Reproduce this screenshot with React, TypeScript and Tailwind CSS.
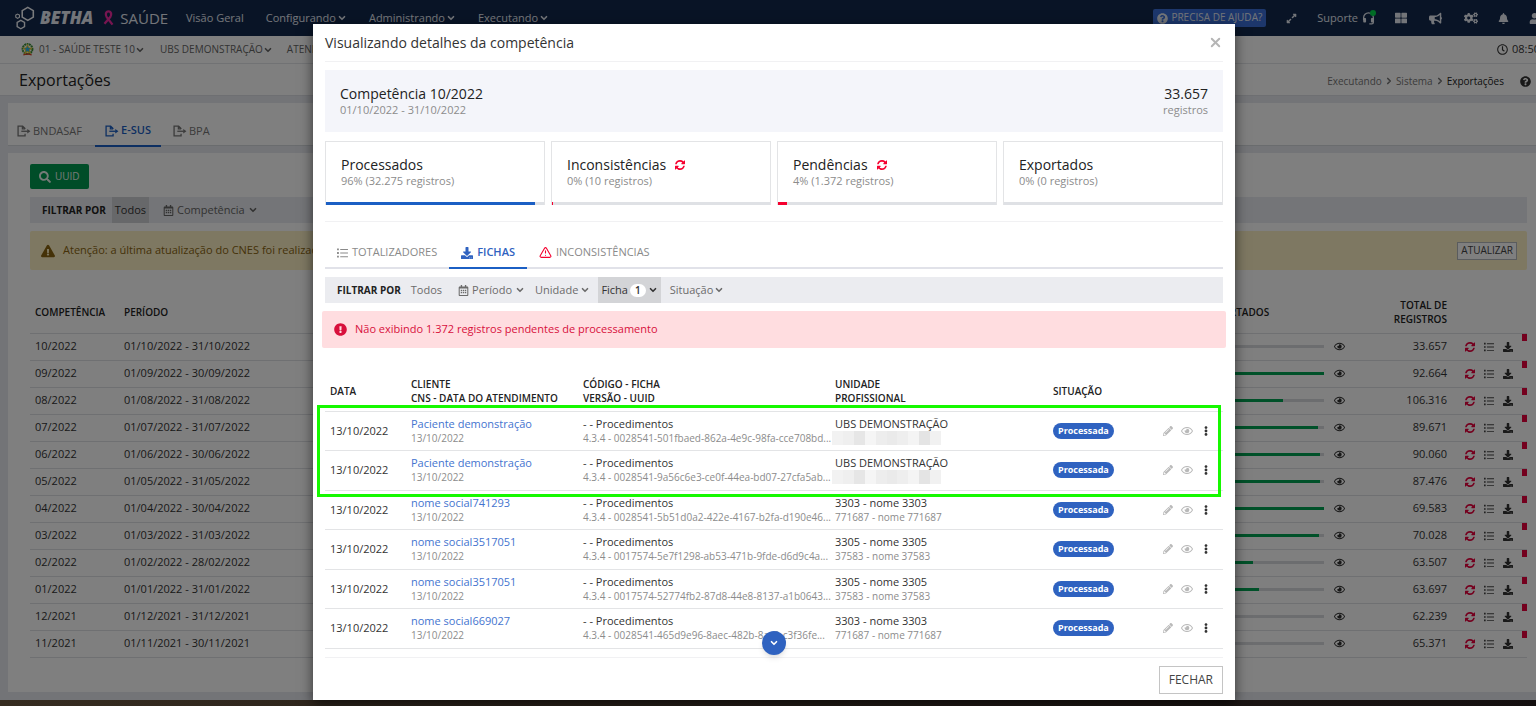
import type { ReactNode } from "react";
import {
  FaBell,
  FaBullhorn,
  FaCogs,
  FaDownload,
  FaEllipsisV,
  FaExclamationCircle,
  FaExclamationTriangle,
  FaExpandAlt,
  FaPencilAlt,
  FaQuestionCircle,
  FaRegCalendarAlt,
  FaRegClock,
  FaRegEye,
  FaSearch,
  FaThLarge,
  FaUser,
} from "react-icons/fa";
import { ChevronDown, ChevronRight, TriangleAlert, X } from "lucide-react";

const competencias = [
  { id: "10/2022", periodo: "01/10/2022 - 31/10/2022", exported: 0, total: "33.657" },
  { id: "09/2022", periodo: "01/09/2022 - 30/09/2022", exported: 100, total: "92.664" },
  { id: "08/2022", periodo: "01/08/2022 - 31/08/2022", exported: 66, total: "106.316" },
  { id: "07/2022", periodo: "01/07/2022 - 31/07/2022", exported: 95, total: "89.671" },
  { id: "06/2022", periodo: "01/06/2022 - 30/06/2022", exported: 97, total: "90.060" },
  { id: "05/2022", periodo: "01/05/2022 - 31/05/2022", exported: 97, total: "87.476" },
  { id: "04/2022", periodo: "01/04/2022 - 30/04/2022", exported: 100, total: "69.583" },
  { id: "03/2022", periodo: "01/03/2022 - 31/03/2022", exported: 96, total: "70.028" },
  { id: "02/2022", periodo: "01/02/2022 - 28/02/2022", exported: 41, total: "63.507" },
  { id: "01/2022", periodo: "01/01/2022 - 31/01/2022", exported: 46, total: "63.697" },
  { id: "12/2021", periodo: "01/12/2021 - 31/12/2021", exported: 0, total: "62.239" },
  { id: "11/2021", periodo: "01/11/2021 - 30/11/2021", exported: 0, total: "65.371" },
];

const summaries = [
  { title: "Processados", detail: "96% (32.275 registros)", percent: 96, bar: "bg-[#1b5fc4]", refresh: false },
  { title: "Inconsistências", detail: "0% (10 registros)", percent: 0.5, bar: "bg-[#f5002f]", refresh: true },
  { title: "Pendências", detail: "4% (1.372 registros)", percent: 4, bar: "bg-[#f5002f]", refresh: true },
  { title: "Exportados", detail: "0% (0 registros)", percent: 0, bar: "bg-[#00a651]", refresh: false },
];

const fichas = [
  { cliente: "Paciente demonstração", uuid: "4.3.4 - 0028541-501fbaed-862a-4e9c-98fa-cce708bd...", unidade: "UBS DEMONSTRAÇÃO", profissional: "" },
  { cliente: "Paciente demonstração", uuid: "4.3.4 - 0028541-9a56c6e3-ce0f-44ea-bd07-27cfa5ab...", unidade: "UBS DEMONSTRAÇÃO", profissional: "" },
  { cliente: "nome social741293", uuid: "4.3.4 - 0028541-5b51d0a2-422e-4167-b2fa-d190e46...", unidade: "3303 - nome 3303", profissional: "771687 - nome 771687" },
  { cliente: "nome social3517051", uuid: "4.3.4 - 0017574-5e7f1298-ab53-471b-9fde-d6d9c4a...", unidade: "3305 - nome 3305", profissional: "37583 - nome 37583" },
  { cliente: "nome social3517051", uuid: "4.3.4 - 0017574-52774fb2-87d8-44e8-8137-a1b0643...", unidade: "3305 - nome 3305", profissional: "37583 - nome 37583" },
  { cliente: "nome social669027", uuid: "4.3.4 - 0028541-465d9e96-8aec-482b-8ac0-c3f36fe...", unidade: "3303 - nome 3303", profissional: "771687 - nome 771687" },
];

const maskTones = [
  "bg-[#f2f2f2]",
  "bg-[#efefef]",
  "bg-[#e6e6e6]",
  "bg-[#f5f5f5]",
  "bg-[#ededed]",
  "bg-[#eaeaea]",
  "bg-[#eeeeee]",
  "bg-[#f4f4f4]",
  "bg-[#e4e4e4]",
  "bg-[#f1f1f1]",
];

function Caret() {
  return <ChevronDown className="size-[10px]" strokeWidth={4} aria-hidden="true" />;
}

function RefreshIcon({ className }: { className?: string }) {
  return (
    <svg viewBox="0 0 1536 1536" className={className} fill="currentColor" aria-hidden="true">
      <path d="M1511 928q0 5-1 7-64 268-268 434.500t-478 166.500q-146 0-282.500-55t-243.500-157l-129 129q-19 19-45 19t-45-19-19-45v-448q0-26 19-45t45-19h448q26 0 45 19t19 45-19 45l-137 137q71 66 161 102t187 36q134 0 250-65t186-179q11-17 53-117 8-23 30-23h192q13 0 22.500 9.500t9.500 22.500zm25-800v448q0 26-19 45t-45 19h-448q-26 0-45-19t-19-45 19-45l138-138q-148-137-349-137-134 0-250 65t-186 179q-11 17-53 117-8 23-30 23h-199q-13 0-22.500-9.500t-9.500-22.500v-7q65-268 270-434.500t480-166.500q146 0 284 55.500t245 156.500l130-129q19-19 45-19t45 19 19 45z" />
    </svg>
  );
}

function ListIcon({ className }: { className?: string }) {
  return (
    <svg viewBox="0 0 24 22" className={className} fill="currentColor" aria-hidden="true">
      <path d="M0 1h4v4H0zM0 9h4v4H0zM0 17h4v4H0zM7 2h17v2.200H7zM7 10h17v2.200H7zM7 18h17v2.200H7z" />
    </svg>
  );
}

function FileExportIcon() {
  return (
    <svg viewBox="0 0 26 22" className="h-3 w-[14px]" fill="none" stroke="currentColor" strokeWidth="2.4" aria-hidden="true">
      <path d="M15 7V6.500L10.500 2H2v18h13v-4M10 2v5h5" />
      <path d="M8 11.500h12" />
      <path d="M19 7.500l6 4-6 4z" fill="currentColor" stroke="none" />
    </svg>
  );
}

function BethaMark() {
  return (
    <svg viewBox="0 0 22 26" className="h-6 w-[22px]" fill="none" stroke="#f4f6fa" aria-hidden="true">
      <path d="M14 1.500l6 3.500v7l-6 3.500-6-3.500V5z" strokeWidth="1.700" />
      <path d="M6.500 15.500l4 2.300v4.600l-4 2.300-4-2.300v-4.600z" strokeWidth="1.500" />
      <path d="M3 8.800l2 1.100v2.300l-2 1.200-2-1.200V9.900z" strokeWidth="1.200" />
    </svg>
  );
}

function RibbonIcon() {
  return (
    <svg viewBox="0 0 12 18" className="h-4 w-[11px]" fill="none" stroke="#ee2aa0" aria-hidden="true">
      <path d="M10.500 16.500L4 8C2.200 5.500 2.800 1.500 6 1.500S9.800 5.500 8 8L1.500 15.500" strokeWidth="2.600" />
    </svg>
  );
}

function HeadsetIcon() {
  return (
    <svg viewBox="0 0 16 16" className="size-[13px]" fill="currentColor" aria-hidden="true">
      <path d="M2 10V7a6 6 0 0 1 12 0v5.500a2 2 0 0 1-2 2H9" fill="none" stroke="currentColor" strokeWidth="1.600" />
      <rect x="1.500" y="7.500" width="3.500" height="5.500" rx="1" />
      <rect x="11" y="7.500" width="3.500" height="5.500" rx="1" />
    </svg>
  );
}

function CrestIcon() {
  return (
    <svg viewBox="0 0 14 14" className="size-[13px]" aria-hidden="true">
      <circle cx="7" cy="6.500" r="5.300" fill="none" stroke="#3d8f3a" strokeWidth="2.200" strokeDasharray="2 .6" />
      <path d="M7 .8l1.700 4 4 .3-3.100 2.700 1 4.100L7 9.900l-3.600 2 1-4.100L1.300 5.100l4-.3z" fill="#f1d021" />
      <path d="M7 3l1 2.500 2.600.2-2 1.700.6 2.600L7 8.600 4.800 10l.6-2.600-2-1.700L6 5.500z" fill="#2fb3e8" />
      <path d="M2.500 12.800l4.500-1 4.500 1" fill="none" stroke="#d8432b" strokeWidth="1.300" />
    </svg>
  );
}

function IconButton({ label, className, children }: { label: string; className?: string; children: ReactNode }) {
  return (
    <button type="button" aria-label={label} className={className}>
      {children}
    </button>
  );
}

function TopNav() {
  return (
    <header className="flex h-9 items-center bg-[#12294d] pl-[14px] text-xs text-[#e6eaf2]">
      <div className="flex w-[172px] items-center">
        <BethaMark />
        <span className="ml-1 text-[17px] font-extrabold italic">BETHA</span>
        <span className="ml-[10px]">
          <RibbonIcon />
        </span>
        <span className="ml-[6px] text-[15px]">SAÚDE</span>
      </div>
      <nav className="flex items-center gap-[22px] text-[11px]">
        <a href="#">Visão Geral</a>
        {["Configurando", "Administrando", "Executando"].map((item) => (
          <a key={item} href="#" className="flex items-center gap-px">
            {item}
            <Caret />
          </a>
        ))}
      </nav>
      <div className="ml-auto flex items-center">
        <button type="button" className="mr-5 flex h-[18px] items-center gap-[3px] rounded-xs bg-[#3a6fd8] px-1 text-[10px]">
          <FaQuestionCircle className="size-[11px]" />
          PRECISA DE AJUDA?
        </button>
        <IconButton label="Expandir" className="mr-5">
          <FaExpandAlt className="size-[11px]" />
        </IconButton>
        <a href="#" className="relative mr-5 flex items-center gap-1 text-[11px]">
          Suporte
          <HeadsetIcon />
          <span className="absolute -top-px -right-px size-[6px] rounded-full bg-[#00d84a]" />
        </a>
        <IconButton label="Aplicativos" className="mr-[22px]">
          <FaThLarge className="size-3" />
        </IconButton>
        <IconButton label="Novidades" className="mr-[22px]">
          <FaBullhorn className="size-[13px]" />
        </IconButton>
        <IconButton label="Configurações" className="mr-5">
          <FaCogs className="size-[14px]" />
        </IconButton>
        <IconButton label="Notificações" className="mr-5">
          <FaBell className="size-[11px]" />
        </IconButton>
        <IconButton label="Usuário" className="mr-2">
          <FaUser className="size-[11px]" />
        </IconButton>
      </div>
    </header>
  );
}

function ContextBar() {
  return (
    <div className="flex h-7 items-center border-b border-[#e2e4e8] bg-white pl-[21px] text-[10px] text-[#666]">
      <CrestIcon />
      <a href="#" className="ml-[5px] flex items-center">
        01 - SAÚDE TESTE 10
        <Caret />
      </a>
      <a href="#" className="ml-[15px] flex items-center">
        UBS DEMONSTRAÇÃO
        <Caret />
      </a>
      <a href="#" className="ml-[14px]">
        ATENDIMENTO
      </a>
      <span className="ml-auto flex w-[51px] items-center gap-1 text-[11px] whitespace-nowrap text-[#333]">
        <FaRegClock className="size-[11px] shrink-0" />
        08:50
      </span>
    </div>
  );
}

function TitleBar() {
  return (
    <div className="flex h-8 items-center justify-between border-b border-[#dcdfe4] bg-white pr-[17px] pl-[19px]">
      <h1 className="text-base text-[#222]">Exportações</h1>
      <nav aria-label="Breadcrumb" className="flex items-center gap-[2px] pt-[3px] text-[10px] text-[#777]">
        <a href="#">Executando</a>
        <ChevronRight className="size-[10px]" strokeWidth={4} />
        <a href="#">Sistema</a>
        <ChevronRight className="size-[10px]" strokeWidth={4} />
        <span className="text-[#222]">Exportações</span>
        <FaQuestionCircle className="ml-[14px] size-[11px] text-[#333]" />
      </nav>
    </div>
  );
}

function CompetenciasTable() {
  return (
    <table className="mt-[21px] w-full table-fixed text-[11px] text-[#333]">
      <colgroup>
        <col className="w-[89px]" />
        <col className="w-[180px]" />
        <col />
        <col className="w-[120px]" />
        <col className="w-[30px]" />
        <col className="w-[93px]" />
        <col className="w-[80px]" />
      </colgroup>
      <thead>
        <tr className="h-[42px] border-b border-[#dfe1e5] text-left text-[10px] leading-[14px] text-[#222]">
          <th className="pl-[5px] font-semibold">COMPETÊNCIA</th>
          <th className="pl-[5px] font-semibold">PERÍODO</th>
          <td />
          <th className="font-semibold">EXPORTADOS</th>
          <td />
          <th className="pl-8 text-right font-semibold">TOTAL DE REGISTROS</th>
          <td />
        </tr>
      </thead>
      <tbody>
        {competencias.map((row) => (
          <tr key={row.id} className="h-[27px] border-b border-[#dfe1e5]">
            <td className="pl-[5px]">{row.id}</td>
            <td className="pl-[5px]">{row.periodo}</td>
            <td />
            <td>
              <div className="h-[3px] bg-[#d8dade]">
                <div className="h-full bg-[#00a352]" style={{ width: `${row.exported}%` }} />
              </div>
            </td>
            <td>
              <FaRegEye className="mx-auto size-[11px]" />
            </td>
            <td className="text-right">{row.total}</td>
            <td className="relative">
              <div className="flex items-center gap-[9px] pl-[18px]">
                <IconButton label="Reprocessar" className="text-[#e8003c]">
                  <RefreshIcon className="size-[10px]" />
                </IconButton>
                <IconButton label="Detalhes" className="text-[#444]">
                  <ListIcon className="size-[10px]" />
                </IconButton>
                <IconButton label="Baixar">
                  <FaDownload className="size-[10px]" />
                </IconButton>
              </div>
              <span className="absolute top-0 right-0 h-[7px] w-[5px] bg-[#e8003c]" />
            </td>
          </tr>
        ))}
      </tbody>
    </table>
  );
}

function ExportPage() {
  return (
    <>
      <TopNav />
      <ContextBar />
      <TitleBar />
      <main className="bg-[#e6e9ef] pt-[7px] pb-2 pl-2">
        <div className="flex h-[43px] items-end gap-2 border-b border-[#d5d8dd] bg-white text-[11px] text-[#777]">
          <a href="#" className="flex h-7 items-center gap-[2px] px-[9px]">
            <FileExportIcon />
            BNDASAF
          </a>
          <a href="#" className="-mb-[2px] -ml-1 flex h-[31px] items-center gap-[2px] border-b-2 border-[#1b5fc4] px-[10px] font-semibold text-[#1b5fc4]">
            <FileExportIcon />
            E-SUS
          </a>
          <a href="#" className="flex h-7 items-center gap-[2px] px-1">
            <FileExportIcon />
            BPA
          </a>
        </div>
        <section className="mt-[7px] bg-white pt-[11px] pr-[21px] pb-[34px] pl-[22px]">
          <button type="button" className="flex h-[25px] items-center gap-1 rounded-xs bg-[#009a50] px-[9px] text-[10px] text-[#e9f5ee]">
            <FaSearch className="size-3" />
            UUID
          </button>
          <div className="mt-2 flex h-[26px] items-center bg-[#e9ebf0] pl-3 text-[11px] text-[#666]">
            <span className="text-[10px] font-bold text-[#222]">FILTRAR POR</span>
            <button type="button" className="ml-[6px] h-full bg-[#cfd1d5] px-[3px] text-[#333]">
              Todos
            </button>
            <button type="button" className="ml-[14px] flex items-center gap-[3px]">
              <FaRegCalendarAlt className="size-[11px]" />
              Competência
              <Caret />
            </button>
          </div>
          <div className="mt-2 flex h-[39px] items-center rounded-xs bg-[#fdf0c4] pr-[10px] pl-[11px] text-[11px] text-[#8a6510]">
            <FaExclamationTriangle className="size-[14px]" />
            <span className="ml-2">Atenção: a última atualização do CNES foi realizada há mais de 30 dias</span>
            <button type="button" className="ml-auto h-[18px] border border-[#b5b8bd] bg-white px-[3px] text-[10px] text-[#444]">
              ATUALIZAR
            </button>
          </div>
          <CompetenciasTable />
        </section>
      </main>
    </>
  );
}

function FilterBar() {
  return (
    <div className="mt-2 flex h-[26px] items-center bg-[#ebecf0] pl-3 text-[11px] text-[#6b6b6b]">
      <span className="text-[10px] font-bold text-[#222]">FILTRAR POR</span>
      <button type="button" className="ml-[10px]">
        Todos
      </button>
      <button type="button" className="ml-4 flex items-center gap-[3px]">
        <FaRegCalendarAlt className="size-[11px]" />
        Período
        <Caret />
      </button>
      <button type="button" className="ml-[10px] flex items-center gap-[2px]">
        Unidade
        <Caret />
      </button>
      <button type="button" className="ml-2 flex h-full items-center gap-[2px] bg-[#d3d4d7] px-[3px] text-[#333]">
        Ficha
        <span className="flex h-[13px] items-center rounded-full bg-white px-[5px] text-[10px] font-semibold">1</span>
        <Caret />
      </button>
      <button type="button" className="ml-[9px] flex items-center gap-px">
        Situação
        <Caret />
      </button>
    </div>
  );
}

function FichasTable() {
  return (
    <div className="relative mt-[23px]">
      <table className="w-full table-fixed text-[11px] text-[#333]">
        <colgroup>
          <col className="w-[81px]" />
          <col className="w-[172px]" />
          <col className="w-[252px]" />
          <col className="w-[218px]" />
          <col />
          <col className="w-[66px]" />
        </colgroup>
        <thead>
          <tr className="h-10 border-b border-[#e3e4e6] text-left text-[10px] leading-[14px] text-[#222]">
            <th className="pl-[5px] font-semibold">DATA</th>
            <th className="pl-[5px] font-semibold">
              CLIENTE
              <br />
              CNS - DATA DO ATENDIMENTO
            </th>
            <th className="pl-[5px] font-semibold">
              CÓDIGO - FICHA
              <br />
              VERSÃO - UUID
            </th>
            <th className="pl-[5px] font-semibold">
              UNIDADE
              <br />
              PROFISSIONAL
            </th>
            <th className="pl-[5px] font-semibold">SITUAÇÃO</th>
            <td />
          </tr>
        </thead>
        <tbody>
          {fichas.map((ficha, fichaIdx) => (
            <tr key={fichaIdx} className="h-[39px] border-b border-[#e3e4e6] leading-[14px] even:h-10">
              <td className="pl-[5px]">13/10/2022</td>
              <td className="pl-[5px]">
                <a href="#" className="block text-[#4474cf]">
                  {ficha.cliente}
                </a>
                <span className="block text-[10px] text-[#8c8c8c]">13/10/2022</span>
              </td>
              <td className="pl-[5px] whitespace-nowrap">
                <span className="block">- - Procedimentos</span>
                <span className="block text-[10px] text-[#8c8c8c]">{ficha.uuid}</span>
              </td>
              <td className="pl-[5px]">
                <span className="block">{ficha.unidade}</span>
                {ficha.profissional ? (
                  <span className="block text-[10px] text-[#8c8c8c]">{ficha.profissional}</span>
                ) : (
                  <span className="-ml-[3px] flex h-[14px] w-[109px]">
                    {maskTones.map((tone) => (
                      <span key={tone} className={`flex-1 ${tone}`} />
                    ))}
                  </span>
                )}
              </td>
              <td className="pl-[5px]">
                <span className="inline-flex h-4 items-center rounded-full bg-[#2f62c0] px-[5px] text-[9px] font-bold text-white">
                  Processada
                </span>
              </td>
              <td>
                <div className="flex items-center gap-2 pl-[6px] text-[#b9b9b9]">
                  <IconButton label="Editar">
                    <FaPencilAlt className="size-[10px]" />
                  </IconButton>
                  <IconButton label="Visualizar">
                    <FaRegEye className="size-3" />
                  </IconButton>
                  <IconButton label="Mais opções" className="text-[#333]">
                    <FaEllipsisV className="size-[10px]" />
                  </IconButton>
                </div>
              </td>
            </tr>
          ))}
        </tbody>
      </table>
      {/* marks the two demo patients */}
      <div className="pointer-events-none absolute top-[34px] right-[2px] -left-2 h-[92px] border-[3px] border-[#16f800]" />
      <button
        type="button"
        aria-label="Rolar para baixo"
        className="absolute -bottom-[6px] left-1/2 flex size-6 -translate-x-1/2 items-center justify-center rounded-full bg-[#2f62c0] text-white shadow-md"
      >
        <Caret />
      </button>
    </div>
  );
}

function CompetenciaDialog() {
  return (
    <div
      role="dialog"
      aria-labelledby="dialog-title"
      className="flex w-full max-w-[922px] flex-col bg-white px-3 shadow-[0_4px_12px_rgba(0,0,0,0.6)]"
    >
      <div className="flex h-[38px] items-center justify-between border-b border-[#f1f1f3]">
        <h2 id="dialog-title" className="text-sm text-[#333]">
          Visualizando detalhes da competência
        </h2>
        <IconButton label="Fechar janela" className="text-[#b5b5b5]">
          <X className="size-[15px]" strokeWidth={3} />
        </IconButton>
      </div>
      <div className="mt-2 flex h-[62px] items-center justify-between bg-[#f4f5fa] px-[15px] text-[#222]">
        <div>
          <p className="text-sm leading-[17px]">Competência 10/2022</p>
          <p className="text-[11px] leading-4 text-[#8c8c8c]">01/10/2022 - 31/10/2022</p>
        </div>
        <div className="text-right">
          <p className="text-sm leading-[17px]">33.657</p>
          <p className="text-[11px] leading-4 text-[#8c8c8c]">registros</p>
        </div>
      </div>
      <div className="mt-[9px] grid grid-cols-4 gap-[6px] border-b border-[#f1f1f3] pb-4">
        {summaries.map((summary) => (
          <div key={summary.title} className="border border-b-0 border-[#e3e4e6]">
            <div className="h-[60px] px-[15px] pt-[14px]">
              <p className="flex items-center gap-[9px] text-sm leading-[17px] text-[#222]">
                {summary.title}
                {summary.refresh && <RefreshIcon className="size-[10px] text-[#f5002f]" />}
              </p>
              <p className="text-[11px] leading-4 text-[#8c8c8c]">{summary.detail}</p>
            </div>
            <div className="h-[3px] bg-[#dfe1e5]">
              <div className={`h-full ${summary.bar}`} style={{ width: `${summary.percent}%` }} />
            </div>
          </div>
        ))}
      </div>
      <div className="mt-4 flex h-[31px] items-stretch border-b-2 border-[#e1e2e9] text-[11px] text-[#8a8a8a]">
        <a href="#" className="flex items-center gap-1 px-3">
          <ListIcon className="h-[10px] w-[11px]" />
          TOTALIZADORES
        </a>
        <a href="#" className="-mb-[2px] flex items-center gap-1 border-b-2 border-[#1b5fc4] px-3 font-semibold text-[#2f62c0]">
          <FaDownload className="size-3" />
          FICHAS
        </a>
        <a href="#" className="flex items-center gap-1 px-3">
          <TriangleAlert className="size-[13px] text-[#f5002f]" strokeWidth={2} />
          INCONSISTÊNCIAS
        </a>
      </div>
      <FilterBar />
      <div className="-mx-[3px] mt-2 flex h-[37px] items-center gap-2 rounded-xs bg-[#ffdde0] pl-3 text-[11px] text-[#d8103c]">
        <FaExclamationCircle className="size-[13px]" />
        Não exibindo 1.372 registros pendentes de processamento
      </div>
      <FichasTable />
      <div className="mt-2 flex items-start justify-end border-t border-[#f1f1f3] pt-2">
        <button type="button" className="h-7 border border-[#c4c4c4] px-[9px] text-xs text-[#444]">
          FECHAR
        </button>
      </div>
    </div>
  );
}

export default function App() {
  return (
    <div className="min-h-screen overflow-hidden bg-linear-to-r from-[#362c20] to-[#140f0f] font-['Open_Sans',sans-serif]">
      <div className="relative w-[calc(100%+12px)]">
        <ExportPage />
        <div className="absolute inset-0 flex justify-center bg-black/50 pt-6">
          <CompetenciaDialog />
        </div>
      </div>
    </div>
  );
}
